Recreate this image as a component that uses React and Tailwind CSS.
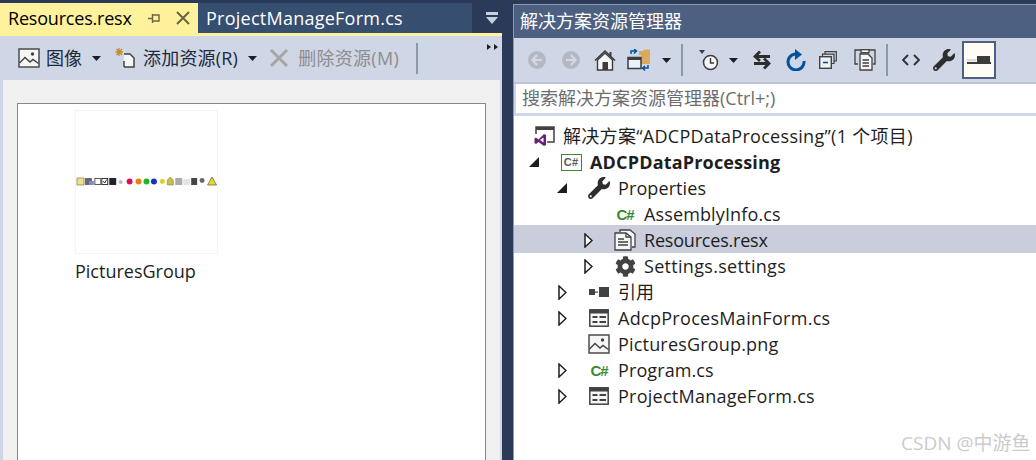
import React from 'react';
import { FaWrench, FaCog } from 'react-icons/fa';

const Caret = ({ color = '#1e1e1e' }) => (
    <svg width="9" height="5" viewBox="0 0 9 5"><path d="M0 0H9L4.5 5Z" fill={color} /></svg>
);

const ImageIcon = () => (
    <svg width="22" height="20" viewBox="0 0 22 20" fill="none">
        <rect x="1" y="1" width="20" height="18" fill="#f6f6f6" stroke="#424242" strokeWidth="1.4" />
        <path d="M1.5 15L7 9.5L12 14L15 11.5L20.5 15.5" stroke="#424242" strokeWidth="1.4" />
        <circle cx="14.5" cy="6" r="1.7" fill="#424242" />
    </svg>
);

const AddIcon = () => (
    <svg width="22" height="22" viewBox="0 0 22 22" fill="none">
        <path d="M4 1V9M0.5 5H8M1.5 2L7 8M7 2L1.5 8" stroke="#c98a2b" strokeWidth="1.3" />
        <path d="M9 7H15L19 11V20H9" stroke="#424242" strokeWidth="1.5" fill="#f6f6f6" />
        <path d="M9 14V20" stroke="#424242" strokeWidth="1.5" />
    </svg>
);

const DeleteX = () => (
    <svg width="20" height="20" viewBox="0 0 20 20"><path d="M2 2L18 18M18 2L2 18" stroke="#a6a6a6" strokeWidth="3" /></svg>
);

const NavCircle = ({ back }) => (
    <svg width="18" height="18" viewBox="0 0 18 18">
        <circle cx="9" cy="9" r="9" fill="#b4b9c1" />
        <path d={back ? 'M9 4L4.5 9L9 14M5 9H14' : 'M9 4L13.5 9L9 14M13 9H4'} stroke="#d4d9e5" strokeWidth="2.2" fill="none" />
    </svg>
);

const HomeIcon = () => (
    <svg width="22" height="22" viewBox="0 0 22 22">
        <path d="M1 11.5L11 2L21 11.5" fill="none" stroke="#3c3c3c" strokeWidth="1.6" />
        <path d="M3.5 11V21H18.5V11L11 4Z" fill="#f6f6f6" stroke="#3c3c3c" strokeWidth="1.4" />
        <rect x="8.5" y="13" width="5.5" height="8" fill="#3c3c3c" />
        <rect x="15.5" y="3" width="2" height="4" fill="#3c3c3c" />
    </svg>
);

const SyncViewIcon = () => (
    <svg width="24" height="22" viewBox="0 0 24 22">
        <path d="M12 2H16L17.5 0.5H23V15H14V6H12Z" fill="#dcaa5e" />
        <rect x="1" y="8.5" width="13" height="11" fill="#eef1f7" stroke="#3c3c3c" strokeWidth="1.5" />
        <rect x="1" y="8" width="13" height="3" fill="#3c3c3c" />
        <path d="M4 5V2H9M7 0L9.5 2L7 4.5" fill="none" stroke="#00539c" strokeWidth="1.5" />
        <path d="M21 16V19H16M18 17L15.5 19L18 21.5" fill="none" stroke="#00539c" strokeWidth="1.5" />
    </svg>
);

const HistoryIcon = () => (
    <svg width="20" height="21" viewBox="0 0 20 21" fill="none">
        <path d="M0 0H6L3 4Z" fill="#3c3c3c" />
        <circle cx="11.5" cy="12.5" r="7" fill="#f6f6f6" stroke="#3c3c3c" strokeWidth="1.5" />
        <path d="M11.5 8V13H15" stroke="#3c3c3c" strokeWidth="1.4" />
    </svg>
);

const SwapIcon = () => (
    <svg width="18" height="20" viewBox="0 0 18 20" fill="none" stroke="#2d2d2d" strokeWidth="2.8">
        <path d="M2 6.5H17M7 1.5L2 6.5L7 11" />
        <path d="M16 13.5H1M11 8.5L16 13.5L11 18.5" />
    </svg>
);

const RefreshIcon = () => (
    <svg width="20" height="22" viewBox="0 0 20 22" fill="none">
        <path d="M13 5.5A8 8 0 1 0 18 12" stroke="#00539c" strokeWidth="3" />
        <path d="M9 0L16 5.5L9 11Z" fill="#00539c" />
    </svg>
);

const CollapseIcon = () => (
    <svg width="18" height="18" viewBox="0 0 18 18" fill="none" stroke="#424242" strokeWidth="1.2">
        <path d="M6 3V0.7H17.3V10H15" />
        <path d="M3.5 5.5V3.2H15V12.5H12.5" />
        <rect x="0.7" y="5.7" width="11.6" height="11.6" fill="#eef1f7" strokeWidth="1.4" />
        <path d="M4 11.5H9" stroke="#00539c" strokeWidth="1.6" />
    </svg>
);

const CopiesIcon = () => (
    <svg width="22" height="22" viewBox="0 0 22 22" fill="none" stroke="#424242" strokeWidth="1.3">
        <path d="M4 15H1V1H7" />
        <path d="M15 1H21V15H19" />
        <path d="M6 5H14L18 9V21H6Z" fill="#f6f6f6" />
        <path d="M8.5 11H15M8.5 14H15M8.5 17H15" />
        <rect x="7" y="0.7" width="8" height="3" fill="#f6f6f6" />
    </svg>
);

const ResxIcon = () => (
    <svg width="22" height="22" viewBox="0 0 22 22" fill="none" stroke="#424242" strokeWidth="1.3">
        <path d="M6 3V1H16L21 5V18H18" fill="#f6f6f6" />
        <path d="M1 4H12L17 8V21H1Z" fill="#f6f6f6" />
        <path d="M4 10H10M4 13H14M4 16H14" strokeWidth="1.5" />
        <path d="M12 4V8H17" />
    </svg>
);

const CodeIcon = () => (
    <svg width="18" height="12" viewBox="0 0 18 12" fill="none" stroke="#2d2d2d" strokeWidth="1.8">
        <path d="M6 1L1 6L6 11M12 1L17 6L12 11" />
    </svg>
);

const PreviewIcon = () => (
    <svg width="24" height="9" viewBox="0 0 24 9">
        <rect x="0" y="6" width="24" height="2" fill="#3c3c3c" />
        <rect x="10" y="0" width="13" height="7" fill="#3c3c3c" />
        <rect x="0" y="3" width="9" height="2.5" fill="#d8dbe2" />
    </svg>
);

const SolutionIcon = () => (
    <svg width="22" height="20" viewBox="0 0 22 20" fill="none">
        <path d="M3 8V1H21V16H14" stroke="#424242" strokeWidth="1.5" />
        <path d="M3 1H21V4H3Z" fill="#424242" />
        <path d="M11 8L5.5 13.5L3 11.5L1.5 12.5V17L3 18L5.5 16L11 20L13 19V9ZM10.5 11.5V16.5L7 14Z" fill="#68217a" />
    </svg>
);

const ProjectIcon = () => (
    <div className="w-[21px] h-[17px] border-[1.5px] border-[#388a34] bg-white flex items-center justify-center">
        <span className="text-[11px] leading-none font-bold text-[#5a5a5a] font-['Liberation_Sans',sans-serif]">C#</span>
    </div>
);

const CsIcon = () => (
    <span className="text-[15px] leading-none font-bold tracking-[-1px] text-[#388a34] font-['Liberation_Sans',sans-serif]">C#</span>
);

const FormIcon = () => (
    <svg width="20" height="18" viewBox="0 0 20 18" fill="none">
        <rect x="0.8" y="0.8" width="18.4" height="16.4" fill="#f6f6f6" stroke="#424242" strokeWidth="1.5" />
        <rect x="1" y="1" width="18" height="3.5" fill="#424242" />
        <path d="M3.5 8H8.5M3.5 13H8.5" stroke="#424242" strokeWidth="2" />
        <path d="M10.5 8H17M10.5 13H17" stroke="#424242" strokeWidth="2" />
    </svg>
);

const RefsIcon = () => (
    <svg width="21" height="10" viewBox="0 0 21 10">
        <rect x="0" y="2" width="6" height="6" fill="#424242" />
        <rect x="6" y="4.5" width="3" height="1.2" fill="#424242" />
        <rect x="10" y="0" width="10" height="10" fill="#424242" />
    </svg>
);

const Arrow = ({ open }) => open ? (
    <svg width="10" height="10" viewBox="0 0 10 10"><path d="M10 0V10H0Z" fill="#1e1e1e" /></svg>
) : (
    <svg width="9" height="15" viewBox="0 0 9 15"><path d="M1 1L8 7.5L1 14Z" fill="#fff" stroke="#1e1e1e" strokeWidth="1.5" /></svg>
);

// small strip of toolbar glyphs inside the PicturesGroup thumbnail
const IconStrip = () => (
    <svg width="142" height="10" viewBox="0 0 142 10">
        <path d="M1 2H8V9H1Z" fill="#efe28c" stroke="#8a8a5a" strokeWidth="0.8" />
        <rect x="9" y="2" width="7" height="7" fill="#667" />
        <rect x="13" y="5" width="5" height="4" fill="#7a8fc9" />
        <rect x="19" y="2.5" width="6" height="6" fill="#fff" stroke="#555" />
        <rect x="26" y="2.5" width="6" height="6" fill="#fff" stroke="#333" />
        <path d="M27 5L29 7L31 3.5" stroke="#333" fill="none" />
        <rect x="33.5" y="2" width="7" height="7" fill="#223" />
        <circle cx="45" cy="6" r="2" fill="#bbb" />
        <circle cx="54" cy="5.5" r="3" fill="#d6105a" />
        <circle cx="63" cy="5.5" r="3" fill="#e8820c" />
        <circle cx="71" cy="5.5" r="3" fill="#18b82a" />
        <circle cx="78.5" cy="5.5" r="3" fill="#1a2fc0" />
        <circle cx="87" cy="5.5" r="2.5" fill="#d8d21a" />
        <path d="M92 9V4L95 1L98 4V9Z" fill="#c9c040" stroke="#777" strokeWidth="0.6" />
        <rect x="100" y="2" width="7" height="7" fill="#aaa" />
        <rect x="108" y="3" width="7" height="6" fill="#e4e4e4" />
        <rect x="116" y="2" width="6" height="7" fill="#444" />
        <circle cx="127" cy="4.5" r="2.5" fill="#667" />
        <path d="M132.5 9L137 1L141.5 9Z" fill="#e8d820" stroke="#444" strokeWidth="0.6" />
    </svg>
);

const treeRows = [
    { label: '解决方案“ADCPDataProcessing”(1 个项目)', pad: 'pl-0 tracking-[0.3px]', icon: <SolutionIcon />, solution: true },
    { label: 'ADCPDataProcessing', pad: 'pl-[6px] tracking-[0.17px]', arrow: 'open', icon: <ProjectIcon />, bold: true },
    { label: 'Properties', pad: 'pl-[34px] tracking-[0.1px]', arrow: 'open', icon: <FaWrench size={22} color="#2d2d2d" /> },
    { label: 'AssemblyInfo.cs', pad: 'pl-[60px] tracking-[0.13px]', icon: <CsIcon /> },
    { label: 'Resources.resx', pad: 'pl-[60px] tracking-[-0.2px]', arrow: 'closed', icon: <ResxIcon />, selected: true },
    { label: 'Settings.settings', pad: 'pl-[60px] tracking-[0.3px]', arrow: 'closed', icon: <FaCog size={21} color="#424242" /> },
    { label: '引用', pad: 'pl-[34px]', arrow: 'closed', icon: <RefsIcon /> },
    { label: 'AdcpProcesMainForm.cs', pad: 'pl-[34px] tracking-[0.3px]', arrow: 'closed', icon: <FormIcon /> },
    { label: 'PicturesGroup.png', pad: 'pl-[34px] tracking-[0.18px]', icon: <ImageIcon /> },
    { label: 'Program.cs', pad: 'pl-[34px] tracking-[0.1px]', arrow: 'closed', icon: <CsIcon /> },
    { label: 'ProjectManageForm.cs', pad: 'pl-[34px] tracking-[0.25px]', arrow: 'closed', icon: <FormIcon /> },
];

const TreeRow = ({ row }) => (
    <div className={'flex items-center whitespace-nowrap ' + row.pad + (row.selected ? ' h-[28px] -mt-[2px] pt-[2px] bg-[#c9cddc]' : ' h-[26px]')}>
        {!row.solution && (
            <span className="w-7 flex justify-center">{row.arrow && <Arrow open={row.arrow === 'open'} />}</span>
        )}
        <span className={row.solution ? 'w-[49px] pl-[19px] flex' : 'w-[42px] pl-1 flex justify-center'}>{row.icon}</span>
        <span className={row.bold ? 'font-bold' : ''}>{row.label}</span>
    </div>
);

const ToolBtn = ({ children, className = 'w-[34px]' }) => (
    <div className={'flex items-center justify-center h-full ' + className}>{children}</div>
);

export default function App() {
    return (
        <div className="relative w-[1036px] h-[460px] overflow-hidden flex bg-[#2a3a58] text-[18px] text-[#1e1e1e] font-['Open_Sans','Noto_Sans_CJK_SC',sans-serif]">
            {/* document pane */}
            <div className="w-[502px] flex flex-col pt-[3px]">
                <div className="flex h-[30px] shrink-0">
                    <div className="w-[198px] bg-[#fff29d] flex items-center pl-2 text-black">
                        <span className="tracking-[-0.2px]">Resources.resx</span>
                        <svg className="ml-[16px]" width="13" height="11" viewBox="0 0 13 11" fill="none" stroke="#6b6540" strokeWidth="1.4">
                            <path d="M0 5.5H4M4.5 1V10M4.5 2H11V8H4.5" />
                        </svg>
                        <svg className="ml-[15px]" width="14" height="14" viewBox="0 0 14 14" fill="none" stroke="#6b6540" strokeWidth="2">
                            <path d="M1 1L13 13M13 1L1 13" />
                        </svg>
                    </div>
                    <div className="w-[274px] bg-[#364e6f] flex items-center pl-2 text-white tracking-[0.25px]">ProjectManageForm.cs</div>
                    <div className="flex-1 flex flex-col items-center justify-center gap-[2px] pl-[10px]">
                        <div className="w-[12px] h-[3px] bg-[#c9d1de]" />
                        <svg width="12" height="7" viewBox="0 0 12 7"><path d="M0 0H12L6 7Z" fill="#c9d1de" /></svg>
                    </div>
                </div>
                <div className="h-[3px] bg-[#fff29d] shrink-0" />
                <div className="h-[44px] bg-[#cfd6e5] flex items-center pl-[18px] shrink-0">
                    <ImageIcon />
                    <span className="ml-[6px] text-[#1e2a3a]">图像</span>
                    <span className="ml-[10px] flex"><Caret /></span>
                    <span className="ml-[14px] flex"><AddIcon /></span>
                    <span className="ml-[6px] text-[#1e2a3a] tracking-[0.2px]">添加资源(R)</span>
                    <span className="ml-[10px] flex"><Caret /></span>
                    <span className="ml-[12px] flex"><DeleteX /></span>
                    <span className="ml-[9px] text-[#8d8d8d] tracking-[0.3px]">删除资源(M)</span>
                    <div className="ml-[17px] w-[2px] h-[31px] bg-[#8e98ac]" />
                    <div className="ml-auto mr-[4px] self-start mt-2 flex gap-[3px]">
                        <svg width="4" height="6" viewBox="0 0 4 6"><path d="M0 0L4 3L0 6Z" fill="#1e1e1e" /></svg>
                        <svg width="4" height="6" viewBox="0 0 4 6"><path d="M0 0L4 3L0 6Z" fill="#1e1e1e" /></svg>
                    </div>
                </div>
                <div className="flex-1 border-l-[3px] border-r-[2px] border-[#cfd6e5] bg-[#f0f0f0] pt-[23px] pl-[14px] pr-[14px] flex min-h-0">
                    <div className="flex-1 bg-white border border-[#828790] border-b-0 pl-[57px] pt-[6px]">
                        <div className="w-[143px] h-[144px] border border-[#f5f5f5] flex items-center pb-[2px]">
                            <IconStrip />
                        </div>
                        <div className="mt-[4px] leading-[26px]">PicturesGroup</div>
                    </div>
                </div>
            </div>

            {/* solution explorer */}
            <div className="ml-[11px] flex-1 flex flex-col mt-1 border-l border-t border-[#8c9bb5]">
                <div className="h-[33px] bg-[#4d6082] text-white flex items-center pl-[6px] shrink-0">解决方案资源管理器</div>
                <div className="h-[44px] bg-[#cfd6e5] flex items-center pl-[6px] shrink-0">
                    <ToolBtn><NavCircle back /></ToolBtn>
                    <ToolBtn><NavCircle /></ToolBtn>
                    <ToolBtn><HomeIcon /></ToolBtn>
                    <ToolBtn><SyncViewIcon /></ToolBtn>
                    <ToolBtn className="w-[20px]"><Caret /></ToolBtn>
                    <div className="w-[2px] h-[32px] ml-[5px] mr-[8px] bg-[#8e98ac]" />
                    <ToolBtn className="w-[36px]"><HistoryIcon /></ToolBtn>
                    <ToolBtn className="w-[12px]"><Caret /></ToolBtn>
                    <ToolBtn className="w-[46px]"><SwapIcon /></ToolBtn>
                    <ToolBtn className="w-[22px]"><RefreshIcon /></ToolBtn>
                    <ToolBtn className="w-[42px]"><CollapseIcon /></ToolBtn>
                    <ToolBtn className="w-[32px]"><CopiesIcon /></ToolBtn>
                    <div className="w-[2px] h-[32px] ml-[5px] mr-[8px] bg-[#8e98ac]" />
                    <ToolBtn className="w-[30px]"><CodeIcon /></ToolBtn>
                    <ToolBtn className="w-[36px]"><FaWrench size={22} color="#2d2d2d" /></ToolBtn>
                    <div className="w-[34px] h-[38px] border-2 border-[#4d6082] bg-[#fffcf4] flex items-center justify-center">
                        <PreviewIcon />
                    </div>
                </div>
                <div className="h-[2px] bg-[#bcc4d5] shrink-0" />
                <div className="bg-[#cfd6e5] pl-[2px] shrink-0">
                    <div className="h-[29px] bg-white pl-[6px] flex items-center text-[#6d6d6d]">搜索解决方案资源管理器(Ctrl+;)</div>
                </div>
                <div className="h-[3px] bg-[#cfd6e5] shrink-0" />
                <div className="flex-1 bg-white pt-[7px]">
                    {treeRows.map((row) => <TreeRow key={row.label} row={row} />)}
                </div>
            </div>

            <span className="absolute left-[901px] top-[429px] text-[19px] text-[#cbcbcb]">CSDN @中游鱼</span>
        </div>
    );
}
